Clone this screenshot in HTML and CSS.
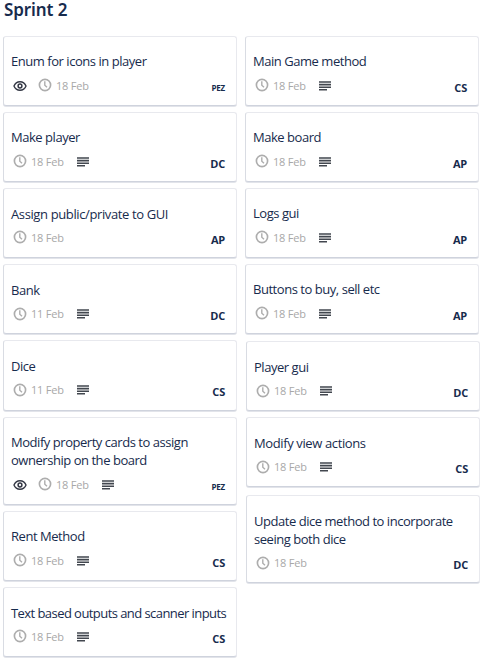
FILE: index.html
```
<!DOCTYPE html>
<html lang="en">
<head>
<meta charset="utf-8">
<title>Sprint 2</title>
<link rel="stylesheet" href="styles.css">
</head>
<body>
<svg class="sprites" aria-hidden="true">
  <symbol id="clock" viewBox="0 0 14 14"><circle cx="7" cy="7" r="5.6" fill="none" stroke="#adadad" stroke-width="1.65"/><path d="M6.8 3.2V7.3L9 9.2" fill="none" stroke="#adadad" stroke-width="1.4"/></symbol>
  <symbol id="eye" viewBox="0 0 14 14"><path d="M1 7C3.2 1.3 10.8 1.3 13 7C10.8 12.7 3.2 12.7 1 7Z" fill="none" stroke="#343845" stroke-width="1.4"/><circle cx="7" cy="7" r="1.9" fill="none" stroke="#343845" stroke-width="1.5"/></symbol>
  <symbol id="lines" viewBox="0 0 12 10"><path d="M0 1H12M0 3.6H12M0 6.2H12M0 8.8H8" fill="none" stroke="#42474f" stroke-width="1.6"/></symbol>
</svg>
<h1 class="heading">Sprint 2</h1>
<main class="board">
  <section class="column">
    <article class="card"><h2 class="title">Enum for icons in player</h2><div class="meta"><svg class="eye"><use href="#eye"/></svg><svg class="clock"><use href="#clock"/></svg><span class="date">18 Feb</span><b class="who small">PEZ</b></div></article>
    <article class="card"><h2 class="title">Make player</h2><div class="meta"><svg class="clock"><use href="#clock"/></svg><span class="date">18 Feb</span><svg class="lines"><use href="#lines"/></svg><b class="who">DC</b></div></article>
    <article class="card"><h2 class="title loose">Assign public/private to GUI</h2><div class="meta"><svg class="clock"><use href="#clock"/></svg><span class="date">18 Feb</span><b class="who">AP</b></div></article>
    <article class="card"><h2 class="title">Bank</h2><div class="meta"><svg class="clock"><use href="#clock"/></svg><span class="date">11 Feb</span><svg class="lines"><use href="#lines"/></svg><b class="who">DC</b></div></article>
    <article class="card"><h2 class="title">Dice</h2><div class="meta"><svg class="clock"><use href="#clock"/></svg><span class="date">11 Feb</span><svg class="lines"><use href="#lines"/></svg><b class="who">CS</b></div></article>
    <article class="card tall"><h2 class="title">Modify property cards to assign<br>ownership on the board</h2><div class="meta"><svg class="eye"><use href="#eye"/></svg><svg class="clock"><use href="#clock"/></svg><span class="date">18 Feb</span><svg class="lines"><use href="#lines"/></svg><b class="who small">PEZ</b></div></article>
    <article class="card"><h2 class="title">Rent Method</h2><div class="meta"><svg class="clock"><use href="#clock"/></svg><span class="date">18 Feb</span><svg class="lines"><use href="#lines"/></svg><b class="who">CS</b></div></article>
    <article class="card"><h2 class="title tight">Text based outputs and scanner inputs</h2><div class="meta"><svg class="clock"><use href="#clock"/></svg><span class="date">18 Feb</span><svg class="lines"><use href="#lines"/></svg><b class="who">CS</b></div></article>
  </section>
  <section class="column second">
    <article class="card"><h2 class="title">Main Game method</h2><div class="meta"><svg class="clock"><use href="#clock"/></svg><span class="date">18 Feb</span><svg class="lines"><use href="#lines"/></svg><b class="who">CS</b></div></article>
    <article class="card"><h2 class="title">Make board</h2><div class="meta"><svg class="clock"><use href="#clock"/></svg><span class="date">18 Feb</span><svg class="lines"><use href="#lines"/></svg><b class="who">AP</b></div></article>
    <article class="card"><h2 class="title">Logs gui</h2><div class="meta"><svg class="clock"><use href="#clock"/></svg><span class="date">18 Feb</span><svg class="lines"><use href="#lines"/></svg><b class="who">AP</b></div></article>
    <article class="card"><h2 class="title">Buttons to buy, sell etc</h2><div class="meta"><svg class="clock"><use href="#clock"/></svg><span class="date">18 Feb</span><svg class="lines"><use href="#lines"/></svg><b class="who">AP</b></div></article>
    <article class="card shifted gap-above"><h2 class="title">Player gui</h2><div class="meta"><svg class="clock"><use href="#clock"/></svg><span class="date">18 Feb</span><svg class="lines"><use href="#lines"/></svg><b class="who">DC</b></div></article>
    <article class="card shifted"><h2 class="title loose">Modify view actions</h2><div class="meta"><svg class="clock"><use href="#clock"/></svg><span class="date">18 Feb</span><svg class="lines"><use href="#lines"/></svg><b class="who">CS</b></div></article>
    <article class="card tall shifted gap-above"><h2 class="title">Update dice method to incorporate<br>seeing both dice</h2><div class="meta"><svg class="clock"><use href="#clock"/></svg><span class="date">18 Feb</span><b class="who">DC</b></div></article>
  </section>
</main>
</body>
</html>
```
FILE: styles.css
```
* { box-sizing: border-box; }
body {
  margin: 0;
  height: 660px;
  overflow: hidden;
  background: #fff;
  color: #172b4d;
  font-family: "Open Sans", "Noto Sans", sans-serif;
}
.sprites { display: none; }
.heading {
  margin: 0;
  height: 35.6px;
  padding-left: 4px;
  font-family: "Noto Sans", sans-serif;
  font-size: 17px;
  line-height: 20px;
  font-weight: 600;
  letter-spacing: -0.1px;
}
.board {
  display: grid;
  grid-template-columns: 233px 233px;
  column-gap: 9px;
  padding-left: 3px;
}
.column { --card: 70.2px; display: flex; flex-direction: column; gap: 6px; }
.second { --card: 70px; }
.card {
  width: 234px;
  height: var(--card);
  padding: 15.6px 11px 0 7px;
  border: 1px solid #e8e9ee;
  border-left-color: #d9dce3;
  border-bottom-color: #cfd3dd;
  border-radius: 3px;
  background: #fff;
  box-shadow: 0 1px 0 #e2e4ea;
}
.tall { height: calc(var(--card) + 18px); }
.shifted { margin-left: 1px; }
.gap-above { margin-top: 1.8px; }
.title {
  margin: 0;
  font-size: 13px;
  line-height: 18px;
  font-weight: 400;
  letter-spacing: -0.46px;
  white-space: nowrap;
}
.loose { letter-spacing: -0.38px; }
.tight { letter-spacing: -0.56px; }
.meta { display: flex; align-items: center; height: 20px; margin-top: 5.4px; padding-left: 2px; }
.meta svg { flex: none; display: block; }
.clock { width: 14px; height: 14px; margin-top: -1px; }
.eye { width: 14px; height: 14px; margin: 0 11px 0 0; }
.date { margin-left: 4px; width: 33px; font-size: 11px; line-height: 16px; letter-spacing: -0.2px; color: #a8a8a8; white-space: nowrap; }
.lines { width: 12px; height: 10px; margin: 0 0 0 13px; }
.who { margin-left: auto; margin-top: 4px; font-size: 11px; line-height: 16px; font-weight: 700; letter-spacing: -0.2px; }
.small { font-size: 8px; letter-spacing: -0.2px; }
```
